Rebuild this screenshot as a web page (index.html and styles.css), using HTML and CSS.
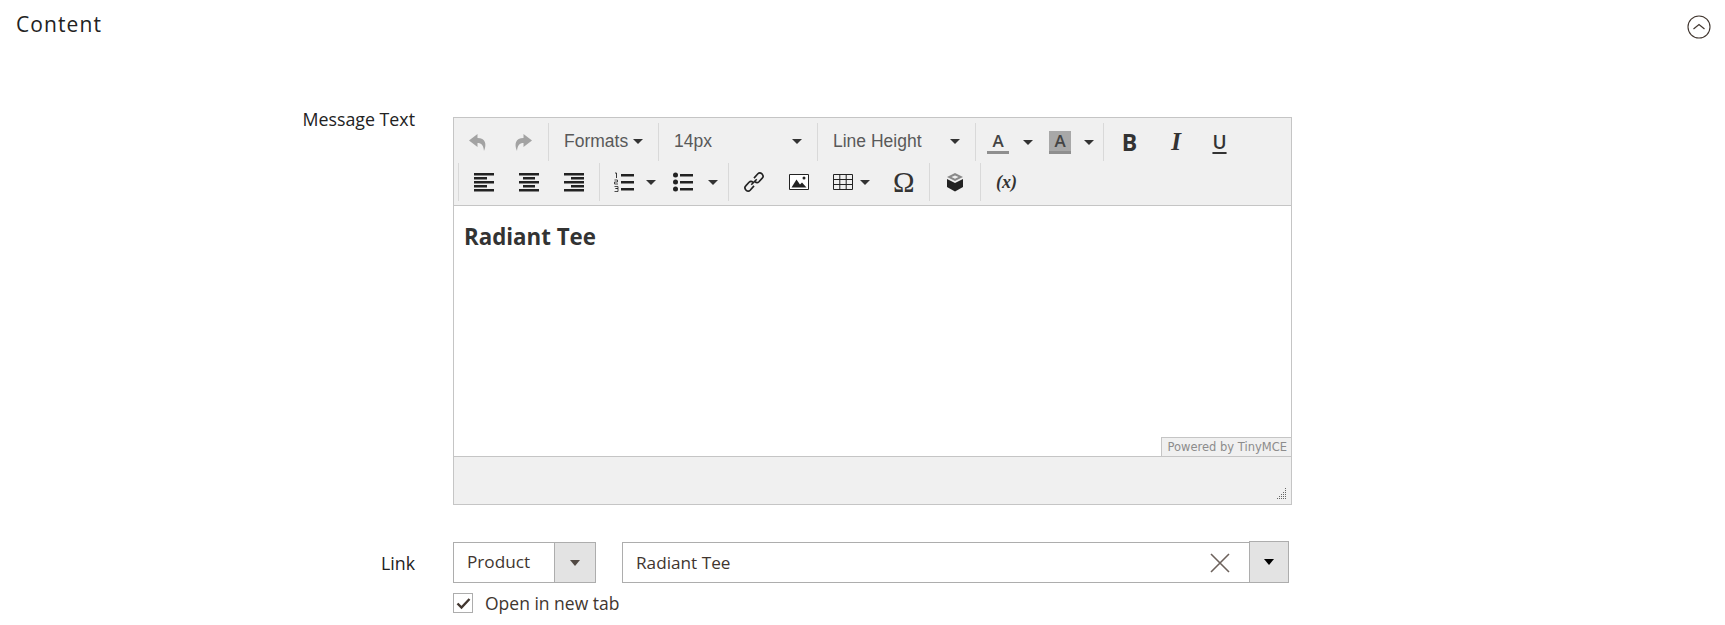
FILE: index.html
```html
<!DOCTYPE html>
<html>
<head>
<meta charset="utf-8">
<title>Content</title>
<link rel="stylesheet" href="styles.css">
</head>
<body>

<div class="section-head">
	<h2>Content</h2>
	<svg class="collapse" width="24" height="24" viewBox="0 0 24 24"><circle cx="12" cy="12" r="11" fill="none" stroke="#41362f" stroke-width="1.1"/><path d="M6.5 14 L12 9.5 L17.5 14" fill="none" stroke="#41362f" stroke-width="1.2"/></svg>
</div>

<div class="field field-message">
	<label class="field-label">Message Text</label>
	<div class="editor">
		<div class="toolbar">
			<div class="tool-row">
				<div class="group group-first">
					<span class="btn"><svg width="20" height="20" viewBox="0 0 20 20"><path d="M9.500 2 L1 8.500 L9.500 15 V11 C13.500 11 15.500 13.500 16 19 C19 12 17.500 6 9.500 6 Z" fill="#a3a3a3"/></svg></span>
					<span class="btn"><svg width="20" height="20" viewBox="0 0 20 20"><path d="M10.500 2 L19 8.500 L10.500 15 V11 C6.500 11 4.500 13.500 4 19 C1 12 2.500 6 10.500 6 Z" fill="#a3a3a3"/></svg></span>
				</div>
				<div class="group"><span class="list list-formats">Formats<i class="caret caret-near"></i></span></div>
				<div class="group"><span class="list list-size">14px<i class="caret"></i></span></div>
				<div class="group"><span class="list list-height">Line Height<i class="caret"></i></span></div>
				<div class="group group-color">
					<span class="color"><span class="color-a">A</span></span><i class="caret caret-color"></i>
					<span class="color"><span class="color-a color-back">A</span></span><i class="caret caret-color"></i>
				</div>
				<div class="group group-format">
					<span class="fmt fmt-b">B</span>
					<span class="fmt fmt-i">I</span>
					<span class="fmt fmt-u">U</span>
				</div>
			</div>
			<div class="tool-row tool-row-second">
				<div class="group group-align">
					<span class="btn"><svg width="20" height="20" viewBox="0 0 20 20"><path d="M0 1h20v2.400H0zM0 5h13v2.400H0zM0 9h20v2.400H0zM0 13h13v2.400H0zM0 17h20v2.400H0z" fill="#222"/></svg></span>
					<span class="btn"><svg width="20" height="20" viewBox="0 0 20 20"><path d="M0 1h20v2.400H0zM4 5h12v2.400H4zM0 9h20v2.400H0zM4 13h12v2.400H4zM0 17h20v2.400H0z" fill="#222"/></svg></span>
					<span class="btn"><svg width="20" height="20" viewBox="0 0 20 20"><path d="M0 1h20v2.400H0zM7 5h13v2.400H7zM0 9h20v2.400H0zM7 13h13v2.400H7zM0 17h20v2.400H0z" fill="#222"/></svg></span>
				</div>
				<div class="group group-lists">
					<span class="btn-list"><svg width="20" height="20" viewBox="0 0 20 20"><path d="M7 2h13v2.400H7zM7 9h13v2.400H7zM7 16h13v2.400H7z" fill="#222"/><path d="M1 1h1.500v5" fill="none" stroke="#222" stroke-width="0.900"/><path d="M0.500 8h3v2h-3v2h3.500M0.500 14.500h3.500v2h-2.500M1.500 16.500h2.500v3h-3.500" fill="none" stroke="#222" stroke-width="0.800"/></svg></span><i class="caret caret-list"></i>
					<span class="btn-list"><svg width="20" height="20" viewBox="0 0 20 20"><circle cx="2.500" cy="3" r="2.500" fill="#222"/><circle cx="2.500" cy="10" r="2.500" fill="#222"/><circle cx="2.500" cy="17" r="2.500" fill="#222"/><path d="M7 2h13v2.400H7zM7 9h13v2.400H7zM7 16h13v2.400H7z" fill="#222"/></svg></span><i class="caret caret-list"></i>
				</div>
				<div class="group group-insert">
					<span class="btn"><svg width="22" height="22" viewBox="0 0 20 20"><g fill="none" stroke="#222" stroke-width="1.500"><path d="M7.500 12.500 L12.500 7.500"/><path d="M10 6.500 L13.500 2.500 C14.500 1.500 16 1.500 17.300 2.700 C18.500 4 18.500 5.500 17.500 6.500 L14.500 9.800 C13.500 10.800 12 10.800 10.800 9.700"/><path d="M10 13.500 L6.500 17.500 C5.500 18.500 4 18.500 2.700 17.300 C1.500 16 1.500 14.500 2.500 13.500 L5.500 10.200 C6.500 9.200 8 9.200 9.200 10.300"/></g></svg></span>
					<span class="btn"><svg width="20" height="20" viewBox="0 0 20 20"><path d="M0.500 2.500h19v15h-19z" fill="#fff" stroke="#222"/><path d="M2.500 15.500 L7.500 7.500 L11 12.500 L13 10.500 L17.500 15.500Z" fill="#222"/><circle cx="15" cy="6" r="1.500" fill="#222"/></svg></span>
					<span class="btn-table"><svg width="20" height="20" viewBox="0 0 20 20"><path d="M0.500 2.500h19v15h-19zM0.500 7.500h19M0.500 12.500h19M6.800 2.500v15M13.200 2.500v15" fill="none" stroke="#222"/></svg><i class="caret caret-table"></i></span>
					<span class="omega">Ω</span>
				</div>
				<div class="group group-widget">
					<span class="btn-widget"><svg width="18" height="20" viewBox="0 0 18 20"><path d="M9 1 L17 5 L9 9 L1 5Z" fill="#8a8a8a"/><path d="M9 3.500 L12.500 5 L9 6.700 L5.500 5Z" fill="#eee"/><path d="M1 7 L9 11 L17 7 V15 L9 19.500 L1 15Z" fill="#222"/></svg></span>
				</div>
				<div class="group group-var"><span class="var">(x)</span></div>
			</div>
		</div>
		<div class="edit-area">
			<h3>Radiant Tee</h3>
			<div class="branding">Powered by TinyMCE</div>
		</div>
		<div class="status">
			<svg class="resize" width="12" height="12" viewBox="0 0 12 12" fill="#666"><path d="M9 0h1v1H9zM9 2h1v1H9zM7 4h1v1H7zM9 4h1v1H9zM5 6h1v1H5zM7 6h1v1H7zM9 6h1v1H9zM3 8h1v1H3zM5 8h1v1H5zM7 8h1v1H7zM9 8h1v1H9zM1 10h1v1H1zM3 10h1v1H3zM5 10h1v1H5zM7 10h1v1H7zM9 10h1v1H9z"/></svg>
		</div>
	</div>
</div>

<div class="field field-link">
	<label class="field-label label-link">Link</label>
	<div class="link-control">
		<div class="link-inputs">
			<div class="select">
				<span class="select-value">Product</span>
				<span class="select-arrow"><i class="arrow arrow-brown"></i></span>
			</div>
			<div class="search">
				<span class="search-value">Radiant Tee</span>
				<svg class="clear" width="20" height="20" viewBox="0 0 20 20"><path d="M1 1 L19 19 M19 1 L1 19" stroke="#6d625c" stroke-width="1.600" fill="none"/></svg>
				<span class="search-arrow"><i class="arrow"></i></span>
			</div>
		</div>
		<div class="check-row">
			<span class="check"><svg width="15" height="13" viewBox="0 0 15 13"><path d="M1.500 6.500 L5.500 10.500 L13.500 2" fill="none" stroke="#41362f" stroke-width="2.400"/></svg></span>
			<span class="check-label">Open in new tab</span>
		</div>
	</div>
</div>

</body>
</html>
```

FILE: styles.css
```css
* {
	box-sizing: border-box;
}

html, body {
	margin: 0;
	padding: 0;
	height: 625px;
	overflow: hidden;
	background: #fff;
}

body {
	font-family: "Open Sans", sans-serif;
	color: #303030;
}

.section-head {
	display: flex;
	justify-content: space-between;
	align-items: flex-start;
	height: 106px;
	padding: 10px 14px 0 16px;
}

.section-head h2 {
	margin: 0;
	font-size: 21px;
	line-height: 28px;
	font-weight: 400;
	letter-spacing: 1.1px;
	color: #222;
}

.collapse {
	margin-top: 5px;
}

.field {
	display: flex;
}

.field-label {
	width: 415px;
	text-align: right;
	font-size: 17.800px;
	font-weight: 500;
	line-height: 24px;
	color: #222;
}

.field-message .field-label {
	height: 25px;
	padding-top: 1px;
}

.editor {
	width: 839px;
	height: 388px;
	margin: 11px 0 0 38px;
	border: 1px solid #c5c5c5;
	display: flex;
	flex-direction: column;
}

.toolbar {
	height: 88px;
	background: #f0f0f0;
	border-bottom: 1px solid #c5c5c5;
	font-family: "Liberation Sans", sans-serif;
	color: #595959;
	font-size: 17.500px;
}

.tool-row {
	display: flex;
	height: 42px;
	padding: 5px 0 0 1px;
}

.tool-row-second {
	height: 45px;
	padding: 3px 0 0 4px;
}

.group {
	display: flex;
	align-items: center;
	border-left: 1px solid #d9d9d9;
	height: 38px;
}

.group-first {
	border-left: 0;
	width: 93px;
}

.btn {
	display: flex;
	align-items: center;
	justify-content: center;
	width: 45px;
	height: 38px;
}

.list {
	display: flex;
	align-items: center;
	justify-content: space-between;
	padding: 0 15px 2px 15px;
}

.list-formats {
	width: 109px;
}

.list-size {
	width: 158px;
}

.list-height {
	width: 157px;
}

.caret {
	display: block;
	width: 0;
	height: 0;
	border-left: 5px solid transparent;
	border-right: 5px solid transparent;
	border-top: 5px solid #333;
}

.group-color {
	width: 128px;
	padding-left: 11px;
}

.color {
	display: block;
	width: 22px;
	text-align: center;
}

.color-a {
	display: block;
	font-family: "Open Sans", sans-serif;
	font-weight: 600;
	font-size: 17px;
	line-height: 20px;
	height: 23px;
	color: #444;
	border-bottom: 3px solid #8f8f8f;
}

.color-back {
	background: #a8a8a8;
	color: #444;
}

.caret-color {
	margin: 0 16px 0 14px;
}

.group-color .caret-color:last-child {
	margin: 0 0 0 13px;
}

.group-format {
	padding-left: 3px;
}

.fmt {
	display: block;
	width: 45px;
	text-align: center;
	font-size: 21px;
	line-height: 38px;
	color: #333;
}

.fmt-b {
	font-family: "Open Sans", sans-serif;
	font-weight: 700;
	font-size: 23px;
}

.fmt-i {
	font-family: "Liberation Serif", serif;
	font-style: italic;
	font-weight: 700;
	font-size: 25px;
	padding-left: 3px;
}

.fmt-u {
	font-family: "Open Sans", sans-serif;
	font-weight: 600;
	text-decoration: underline;
	text-decoration-thickness: 2px;
	text-underline-offset: 3px;
	font-size: 19px;
}

.group-align {
	width: 141px;
	padding-left: 2px;
}

.group-lists {
	width: 129px;
	padding-left: 14px;
}

.btn-list {
	display: flex;
	width: 20px;
}

.caret-list {
	margin: 0 17px 0 12px;
}

.group-lists .caret-list:last-child {
	margin: 0 0 0 15px;
}

.group-insert {
	width: 201px;
	padding-left: 2px;
}

.btn-table {
	display: flex;
	align-items: center;
	width: 58px;
	margin-left: 12px;
}

.caret-table {
	margin-left: 7px;
}

.omega {
	font-family: "Liberation Serif", serif;
	font-size: 29px;
	color: #333;
	margin-left: 2px;
}

.group-widget {
	width: 51px;
	padding-left: 16px;
}

.btn-widget {
	display: flex;
}

.group-var {
	padding-left: 15px;
}

.var {
	font-family: "Liberation Serif", serif;
	font-style: italic;
	font-weight: 700;
	font-size: 18px;
	color: #333;
}

.edit-area {
	position: relative;
	height: 251px;
	padding: 16px 10px 0;
	border-bottom: 1px solid #c5c5c5;
}

.edit-area h3 {
	margin: 0;
	font-size: 22.300px;
	line-height: 30px;
	font-weight: 700;
	color: #333;
}

.branding {
	position: absolute;
	right: 0;
	bottom: -1px;
	width: 130px;
	height: 20px;
	border: 1px solid #c5c5c5;
	border-right: 0;
	background: #f0f0f0;
	font-family: "DejaVu Sans", sans-serif;
	font-size: 11.500px;
	line-height: 18px;
	text-align: right;
	padding-right: 4px;
	color: #8c8c8c;
	white-space: nowrap;
}

.status {
	flex: 1;
	background: #f0f0f0;
	display: flex;
	justify-content: flex-end;
	align-items: flex-end;
	padding: 0 3px 4px 0;
}

.resize {
	display: block;
}

.field-link {
	margin-top: 37px;
}

.label-link {
	line-height: 24px;
	padding-top: 9px;
}

.link-control {
	margin-left: 38px;
}

.link-inputs {
	display: flex;
	align-items: flex-start;
}

.select {
	display: flex;
	width: 143px;
	height: 41px;
	border: 1px solid #adadad;
	font-size: 17.200px;
	color: #41362f;
}

.select-value {
	flex: 1;
	padding-left: 13px;
	line-height: 38px;
}

.select-arrow {
	display: flex;
	align-items: center;
	justify-content: center;
	width: 41px;
	background: #e3e3e3;
	border-left: 1px solid #adadad;
}

.arrow {
	display: block;
	width: 0;
	height: 0;
	border-left: 5px solid transparent;
	border-right: 5px solid transparent;
	border-top: 6px solid #000;
}

.arrow-brown {
	border-top-color: #514943;
}

.search {
	display: flex;
	align-items: center;
	width: 667px;
	height: 41px;
	margin-left: 26px;
	border: 1px solid #adadad;
	border-right: 0;
	font-size: 17.200px;
	color: #41362f;
}

.search-value {
	flex: 1;
	padding: 0 0 1px 13px;
}

.clear {
	margin-right: 19px;
}

.search-arrow {
	display: flex;
	align-items: center;
	justify-content: center;
	align-self: flex-start;
	width: 40px;
	height: 42px;
	margin-top: -2px;
	background: #e3e3e3;
	border: 1px solid #adadad;
}

.check-row {
	display: flex;
	align-items: center;
	margin-top: 8px;
}

.check {
	display: flex;
	align-items: center;
	justify-content: center;
	width: 20px;
	height: 20px;
	border: 1px solid #adadad;
}

.check-label {
	margin-left: 12px;
	font-size: 17.500px;
	line-height: 24px;
	color: #41362f;
}
```
